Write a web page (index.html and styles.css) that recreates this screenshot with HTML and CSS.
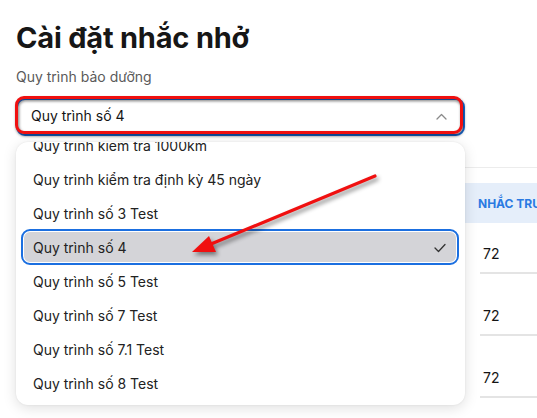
FILE: index.html
```html
<!DOCTYPE html>
<html lang="vi">
<head>
<meta charset="utf-8">
<title>Cài đặt nhắc nhở</title>
<link rel="stylesheet" href="styles.css">
</head>
<body>
<main class="page">
  <h1 class="title">Cài đặt nhắc nhở</h1>
  <label class="field-label">Quy trình bảo dưỡng</label>
  <div class="select-wrap">
    <div class="select">
      <span>Quy trình số 4</span>
      <svg class="chevron" width="11" height="7" viewBox="0 0 11 7"><polyline points="1,6 5.5,1.5 10,6" fill="none" stroke="#8a8a8a" stroke-width="1.3" stroke-linecap="round" stroke-linejoin="round"/></svg>
    </div>
    <div class="annot-box"></div>
    <div class="dropdown">
      <ul class="options">
        <li class="option">Quy trình kiểm tra 1000km</li>
        <li class="option">Quy trình kiểm tra định kỳ 45 ngày</li>
        <li class="option">Quy trình số 3 Test</li>
        <li class="option selected">Quy trình số 4
          <svg class="check" width="12" height="10" viewBox="0 0 12 10"><polyline points="1,5 4.5,8.5 11,1.5" fill="none" stroke="#333" stroke-width="1.3" stroke-linecap="round" stroke-linejoin="round"/></svg>
        </li>
        <li class="option">Quy trình số 5 Test</li>
        <li class="option">Quy trình số 7 Test</li>
        <li class="option">Quy trình số 7.1 Test</li>
        <li class="option">Quy trình số 8 Test</li>
      </ul>
    </div>
  </div>
  <div class="table-card">
    <table class="grid">
      <thead>
        <tr><th class="col-name"></th><th>NHẮC TRƯỚC (KM)</th><th>NHẮC TRƯỚC (NGÀY)</th></tr>
      </thead>
      <tbody>
        <tr><td class="col-name"></td><td><div class="cell-input">72</div></td><td><div class="cell-input">7</div></td></tr>
        <tr><td class="col-name"></td><td><div class="cell-input">72</div></td><td><div class="cell-input">7</div></td></tr>
        <tr><td class="col-name"></td><td><div class="cell-input">72</div></td><td><div class="cell-input">7</div></td></tr>
      </tbody>
    </table>
  </div>
</main>
<svg class="annot-arrow" width="537" height="418" viewBox="0 0 537 418">
  <g class="arrow-shape">
    <line x1="375" y1="176" x2="211" y2="244" stroke="#f01010" stroke-width="3.2" stroke-linecap="round"/>
    <polygon points="192,252 209,236 216,252" fill="#f01010"/>
  </g>
</svg>
</body>
</html>
```
FILE: styles.css
```css
* { box-sizing: border-box; }
html, body { margin: 0; overflow: hidden; }
body {
  width: 537px;
  height: 418px;
  position: relative;
  background: #fff;
  font-family: Inter, "Noto Sans", sans-serif;
  color: #1c1c1c;
}
.page { padding: 20px 0 0 16px; }
.title {
  margin: 0;
  font-size: 29px;
  line-height: 36px;
  font-weight: 700;
  color: #161616;
  letter-spacing: -0.2px;
}
.field-label {
  display: block;
  margin-top: 11px;
  font-size: 14px;
  line-height: 20px;
  color: #5a5a5a;
}
.select-wrap {
  position: relative;
  width: 449px;
  margin-top: 11px;
}
.select {
  height: 38px;
  border: 2px solid #1a73e8;
  border-radius: 9px;
  background: #fff;
  display: flex;
  align-items: center;
  justify-content: space-between;
  padding: 0 16px 2px 13px;
  font-size: 14px;
  line-height: 18px;
  color: #141414;
}
.chevron { display: block; }
.annot-box {
  position: absolute;
  left: -1px;
  top: -2px;
  width: 448px;
  height: 38px;
  border: 3px solid #f01010;
  border-radius: 9px;
  filter: drop-shadow(1.5px 2px 1.5px rgba(0, 0, 0, 0.55));
  z-index: 6;
}
.dropdown {
  position: absolute;
  left: 0;
  top: 44px;
  width: 449px;
  height: 263px;
  background: #fff;
  border-radius: 12px;
  box-shadow: 0 3px 14px rgba(0, 0, 0, 0.13), 0 0 2px rgba(0, 0, 0, 0.08);
  overflow: hidden;
  z-index: 5;
}
.options {
  list-style: none;
  margin: -14px 0 0;
  padding: 0 7px 0 6px;
}
.option {
  height: 34px;
  line-height: 34px;
  font-size: 14px;
  color: #222;
  padding: 1px 12px 0 11px;
  border-radius: 8px;
  display: flex;
  align-items: center;
  justify-content: space-between;
  white-space: nowrap;
}
.option.selected {
  background: #d4d4d8;
  outline: 2px solid #1b6fe0;
  outline-offset: -1px;
  box-shadow: inset 0 0 0 2px #fff;
}
.check { display: block; }
.table-card {
  margin-top: 31px;
  border-top: 1px solid #ececec;
  padding-top: 15px;
}
.grid {
  border-collapse: collapse;
  width: 760px;
}
.grid th {
  height: 40px;
  background: #e5eefa;
  color: #2a7ae2;
  font-size: 12px;
  font-weight: 700;
  text-align: left;
  padding: 0 12px;
  white-space: nowrap;
}
.grid th.col-name { width: 450px; }
.grid td {
  padding: 15px 0 11px 14px;
  font-size: 14px;
  vertical-align: top;
}
.cell-input {
  padding: 7px 0 10px 3px;
  line-height: 17px;
  border-bottom: 2px solid #e4e4e4;
  color: #141414;
}
.annot-arrow {
  position: absolute;
  left: 0;
  top: 0;
  z-index: 10;
  pointer-events: none;
}
.arrow-shape { filter: drop-shadow(2px 3px 2px rgba(0, 0, 0, 0.45)); }
```
